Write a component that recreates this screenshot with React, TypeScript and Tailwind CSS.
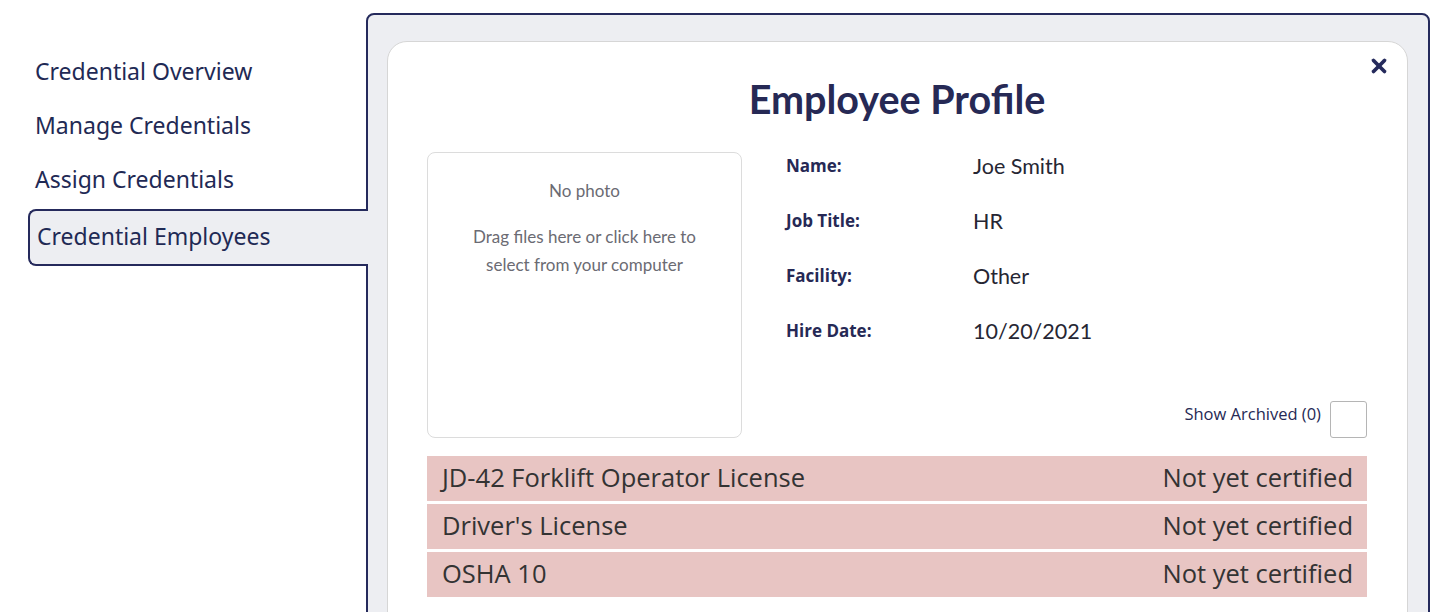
import { X } from "lucide-react";

const navItems = [
  "Credential Overview",
  "Manage Credentials",
  "Assign Credentials",
];

const profile = [
  { label: "Name:", value: "Joe Smith" },
  { label: "Job Title:", value: "HR" },
  { label: "Facility:", value: "Other" },
  { label: "Hire Date:", value: "10/20/2021" },
];

const credentials = [
  "JD-42 Forklift Operator License",
  "Driver's License",
  "OSHA 10",
];

function Sidebar() {
  return (
    <nav className="flex w-[366px] shrink-0 flex-col pt-[44px] pl-[28px] font-['Noto_Sans',sans-serif] text-[23px] text-[#1f2a55]">
      {navItems.map((item) => (
        <a
          key={item}
          className="flex h-[54px] items-center border-2 border-transparent pl-[5px]"
        >
          {item}
        </a>
      ))}
      {/* Active tab joins the panel */}
      <a className="relative z-10 -mr-[2px] mt-[3px] flex h-[57px] items-center rounded-l-[8px] border-2 border-r-0 border-[#252a5c] bg-[#edeef2] pb-[3px] pl-[7px]">
        Credential Employees
      </a>
    </nav>
  );
}

function EmployeeProfile() {
  return (
    <div className="relative min-h-[600px] rounded-t-[20px] border border-[#d6d6d6] bg-white pt-[34px] pr-[40px] pl-[39px]">
      <button className="absolute top-[13px] right-[17px] text-[#252a5c]">
        <X size={22} strokeWidth={4} />
      </button>

      <h1 className="text-center font-['Lato',sans-serif] text-[39.5px] leading-[46px] font-bold text-[#262955]">
        Employee Profile
      </h1>

      <div className="mt-[30px] flex">
        {/* Photo drop zone */}
        <div className="flex h-[286px] w-[315px] shrink-0 flex-col items-center rounded-[8px] border border-[#dcdcdc] pt-[26px] text-center font-['Lato',sans-serif] text-[17px] text-[#6b6b73]">
          <p className="leading-[24px]">No photo</p>
          <p className="mt-[20px] leading-[28px]">
            Drag files here or click here to
            <br />
            select from your computer
          </p>
        </div>

        <div className="ml-[44px] flex flex-1 flex-col justify-between">
          <div className="flex flex-col gap-[33px] pt-[2px]">
            {profile.map((row) => (
              <div key={row.label} className="flex h-[22px] items-center">
                <span className="w-[187px] pt-[1px] font-['Open_Sans',sans-serif] text-[17px] font-bold text-[#262955]">
                  {row.label}
                </span>
                <span className="pt-[2px] font-['Lato',sans-serif] text-[21.5px] text-[#262633]">
                  {row.value}
                </span>
              </div>
            ))}
          </div>

          <label className="flex items-end justify-end gap-[9px] font-['Open_Sans',sans-serif] text-[16.5px] text-[#262955]">
            <span className="mb-[11px]">Show Archived (0)</span>
            <span className="h-[37px] w-[37px] rounded-[3px] border border-[#b5b5b5] bg-white" />
          </label>
        </div>
      </div>

      <div className="mt-[18px] flex flex-col gap-[3px]">
        {credentials.map((name) => (
          <div
            key={name}
            className="flex h-[45px] items-center justify-between bg-[#e8c5c3] pr-[14px] pb-[3px] pl-[15px] font-['Open_Sans',sans-serif] text-[25.5px] text-[#333333]"
          >
            <span>{name}</span>
            <span>Not yet certified</span>
          </div>
        ))}
      </div>
    </div>
  );
}

export default function App() {
  return (
    <div className="flex h-[612px] w-[1441px] overflow-hidden bg-white">
      <Sidebar />
      <main className="mt-[13px] h-[700px] w-[1064px] rounded-t-[8px] border-2 border-[#252a5c] bg-[#edeef2] pt-[26px] pr-[20px] pl-[19px]">
        <EmployeeProfile />
      </main>
    </div>
  );
}
